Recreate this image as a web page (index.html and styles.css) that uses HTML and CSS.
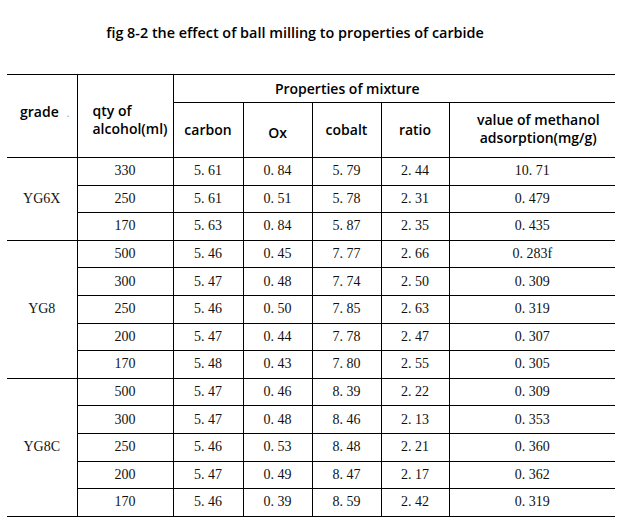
FILE: index.html
```html
<!DOCTYPE html>
<html>
<head>
<meta charset="utf-8">
<link rel="stylesheet" href="styles.css">
</head>
<body>
<div class="page">
  <h1 class="title">fig 8-2 the effect of ball milling to properties of carbide</h1>
  <table class="data">
    <colgroup>
      <col class="c-grade"><col class="c-qty"><col class="c-num"><col class="c-num2"><col class="c-num2"><col class="c-num3"><col class="c-val">
    </colgroup>
    <thead>
      <tr class="h1">
        <th rowspan="2" class="edge h-grade">grade<span class="dot">.</span></th>
        <th rowspan="2" class="h-qty">qty of<br>alcohol(ml)</th>
        <th colspan="5" class="h-props">Properties of mixture</th>
      </tr>
      <tr class="h2">
        <th>carbon</th>
        <th class="h-ox">Ox</th>
        <th>cobalt</th>
        <th>ratio</th>
        <th class="h-val">value of methanol<br>adsorption(mg/g)</th>
      </tr>
    </thead>
    <tbody>
      <tr><td rowspan="3" class="edge">YG6X</td><td>330</td><td>5. 61</td><td>0. 84</td><td>5. 79</td><td>2. 44</td><td>10. 71</td></tr>
      <tr><td>250</td><td>5. 61</td><td>0. 51</td><td>5. 78</td><td>2. 31</td><td>0. 479</td></tr>
      <tr><td>170</td><td>5. 63</td><td>0. 84</td><td>5. 87</td><td>2. 35</td><td>0. 435</td></tr>
      <tr><td rowspan="5" class="edge">YG8</td><td>500</td><td>5. 46</td><td>0. 45</td><td>7. 77</td><td>2. 66</td><td>0. 283f</td></tr>
      <tr><td>300</td><td>5. 47</td><td>0. 48</td><td>7. 74</td><td>2. 50</td><td>0. 309</td></tr>
      <tr><td>250</td><td>5. 46</td><td>0. 50</td><td>7. 85</td><td>2. 63</td><td>0. 319</td></tr>
      <tr><td>200</td><td>5. 47</td><td>0. 44</td><td>7. 78</td><td>2. 47</td><td>0. 307</td></tr>
      <tr><td>170</td><td>5. 48</td><td>0. 43</td><td>7. 80</td><td>2. 55</td><td>0. 305</td></tr>
      <tr><td rowspan="5" class="edge">YG8C</td><td>500</td><td>5. 47</td><td>0. 46</td><td>8. 39</td><td>2. 22</td><td>0. 309</td></tr>
      <tr><td>300</td><td>5. 47</td><td>0. 48</td><td>8. 46</td><td>2. 13</td><td>0. 353</td></tr>
      <tr><td>250</td><td>5. 46</td><td>0. 53</td><td>8. 48</td><td>2. 21</td><td>0. 360</td></tr>
      <tr><td>200</td><td>5. 47</td><td>0. 49</td><td>8. 47</td><td>2. 17</td><td>0. 362</td></tr>
      <tr><td>170</td><td>5. 46</td><td>0. 39</td><td>8. 59</td><td>2. 42</td><td>0. 319</td></tr>
    </tbody>
  </table>
</div>
</body>
</html>
```

FILE: styles.css
```css
html, body {
  margin: 0;
  padding: 0;
  background: #ffffff;
}

.page {
  width: 620px;
}

.title {
  margin: 0;
  height: 74px;
  box-sizing: border-box;
  padding: 23px 30px 0 0;
  text-align: center;
  font-family: "Open Sans", "Noto Sans", sans-serif;
  font-weight: 600;
  font-size: 14.4px;
  line-height: 20px;
  color: #000;
}

.data {
  margin-left: 7px;
  width: 608px;
  table-layout: fixed;
  border-collapse: collapse;
}

.c-grade { width: 70px; }
.c-qty { width: 96px; }
.c-num { width: 70px; }
.c-num2 { width: 69px; }
.c-num3 { width: 68px; }
.c-val { width: 166px; }

.data th,
.data td {
  border: 1px solid #000;
  border-right: none;
  padding: 0;
  text-align: center;
  vertical-align: middle;
}

.data .edge {
  border-left: none;
}

.data th {
  font-family: "Open Sans", "Noto Sans", sans-serif;
  font-weight: 600;
  font-size: 14px;
  line-height: 18px;
  color: #000;
}

.h1 { height: 28px; }
.h2 { height: 55px; }

.data .h-grade {
  text-align: left;
  padding: 0 0 8px 13px;
}

.dot {
  margin-left: 8px;
  color: #7f9cc4;
  font-weight: 400;
  font-size: 10px;
}

.data .h-qty {
  text-align: left;
  padding: 8px 0 0 15px;
}

.data .h-props {
  padding-right: 94px;
}

.data .h-ox {
  padding-top: 6px;
}

.data .h-val {
  padding-left: 12px;
  padding-bottom: 2px;
}

.data td {
  height: 27.6px;
  box-sizing: border-box;
  font-family: "Liberation Serif", "Times New Roman", serif;
  font-size: 14px;
  line-height: 16px;
  color: #111;
}
```
